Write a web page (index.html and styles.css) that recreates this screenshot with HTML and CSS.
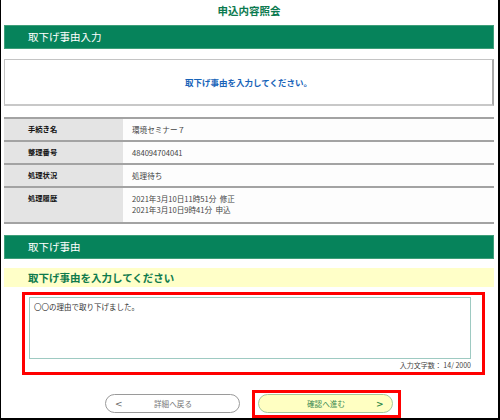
FILE: index.html
```html
<!DOCTYPE html>
<html lang="ja">
<head>
<meta charset="utf-8">
<title>申込内容照会</title>
<link rel="stylesheet" href="styles.css">
</head>
<body>
<div class="frame">
  <div class="title">申込内容照会</div>
  <div class="bar">取下げ事由入力</div>
  <div class="message">取下げ事由を入力してください。</div>
  <div class="info">
    <div class="row"><div class="label">手続き名</div><div class="value">環境セミナー７</div></div>
    <div class="row"><div class="label">整理番号</div><div class="value">484094704041</div></div>
    <div class="row"><div class="label">処理状況</div><div class="value">処理待ち</div></div>
    <div class="row tall"><div class="label">処理履歴</div><div class="value">2021年3月10日11時51分&nbsp;&nbsp;修正<br>2021年3月10日9時41分&nbsp;&nbsp;申込</div></div>
  </div>
  <div class="bar bar-second">取下げ事由</div>
  <div class="notice">取下げ事由を入力してください</div>
  <div class="highlight reason">
    <textarea class="reason-input">〇〇の理由で取り下げました。</textarea>
    <div class="counter">入力文字数：&nbsp;14/&nbsp;2000</div>
  </div>
  <div class="actions">
    <div class="btn btn-back"><span class="arrow">&lt;</span><span class="btn-label">詳細へ戻る</span><span class="arrow spacer">&lt;</span></div>
    <div class="highlight next-wrap">
      <div class="btn btn-next"><span class="arrow spacer">&gt;</span><span class="btn-label">確認へ進む</span><span class="arrow">&gt;</span></div>
    </div>
  </div>
</div>
</body>
</html>
```

FILE: styles.css
```css
html, body {
  margin: 0;
  padding: 0;
  background: #fff;
}

body {
  font-family: "Noto Sans CJK JP", "Noto Sans", sans-serif;
  color: #222;
}

.frame {
  width: 500px;
  height: 420px;
  box-sizing: border-box;
  border-left: 1px solid #000;
  border-right: 2px solid #000;
  border-bottom: 2px solid #000;
  padding: 0 4px 0 3px;
  overflow: hidden;
  background: #fff;
}

.title {
  height: 25px;
  line-height: 21px;
  text-align: center;
  font-size: 10.5px;
  font-weight: bold;
  color: #0b7a4f;
}

.bar {
  height: 24px;
  box-sizing: border-box;
  background: #06835b;
  border: 1px solid #3e9e79;
  color: #fff;
  font-size: 10.5px;
  line-height: 22px;
  padding-left: 23px;
}

.message {
  margin-top: 10px;
  height: 47px;
  box-sizing: border-box;
  border: 1px solid #c4c4c4;
  border-right: 2px solid #a8a8a8;
  border-bottom: 2px solid #c8c8c8;
  display: flex;
  align-items: center;
  justify-content: center;
  font-size: 8.5px;
  font-weight: bold;
  color: #1763b8;
}

.info {
  margin-top: 11px;
  border-bottom: 2px solid #a3a3a3;
}

.row {
  display: flex;
  border-top: 2px solid #a3a3a3;
  height: 21px;
  line-height: 21px;
  font-size: 8px;
}

.label {
  width: 119px;
  flex: none;
  box-sizing: border-box;
  background: #e4e4e4;
  padding-left: 24px;
  font-weight: bold;
  font-size: 7.3px;
  color: #111;
}

.value {
  flex: 1;
  padding-left: 9px;
  background: #fdfdfd;
  color: #444;
  font-size: 7.6px;
}

.row.tall {
  height: 34px;
  line-height: 11px;
}

.row.tall .label,
.row.tall .value {
  padding-top: 5px;
}

.bar-second {
  margin-top: 11px;
}

.notice {
  margin-top: 9px;
  height: 19px;
  line-height: 19px;
  background: #ffffc8;
  padding-left: 24px;
  font-size: 10.5px;
  font-weight: bold;
  color: #0d7a4c;
}

.highlight {
  border: 3px solid #ff0000;
  box-sizing: border-box;
}

.reason {
  margin-top: 5px;
  margin-left: 18px;
  width: 463px;
  height: 83px;
  padding: 2px 11px 0 4px;
}

.reason-input {
  display: block;
  width: 100%;
  height: 62px;
  box-sizing: border-box;
  margin: 0;
  border: 1px solid #9ecac2;
  padding: 4px 4px;
  font-family: "Noto Sans CJK JP", "Noto Sans", sans-serif;
  font-size: 7.5px;
  line-height: 10px;
  color: #333;
  resize: none;
  outline: none;
  background: #fff;
}

.counter {
  text-align: right;
  font-size: 7px;
  line-height: 13px;
  color: #444;
}

.actions {
  display: flex;
  align-items: flex-start;
  margin-top: 15px;
  padding-left: 101px;
}

.btn {
  width: 135px;
  height: 19px;
  box-sizing: border-box;
  border-radius: 10px;
  display: flex;
  align-items: center;
  padding: 0 8px 0 9px;
  font-size: 7.6px;
}

.btn-label {
  flex: 1;
  text-align: center;
}

.arrow {
  width: 8px;
  font-family: "DejaVu Sans", sans-serif;
  font-size: 9px;
}

.spacer {
  visibility: hidden;
}

.btn-back {
  margin-top: 4px;
  border: 1px solid #9a9a9a;
  background: #fff;
  color: #777;
}

.btn-back .arrow {
  color: #666;
}

.next-wrap {
  margin-left: 12px;
  padding: 1px 5px 2px 3px;
}

.btn-next {
  background: #ffffc2;
  border: 1px solid #a6c89a;
  color: #3d8b52;
}

.btn-next .arrow {
  color: #2f8a4a;
  font-weight: bold;
}
```
